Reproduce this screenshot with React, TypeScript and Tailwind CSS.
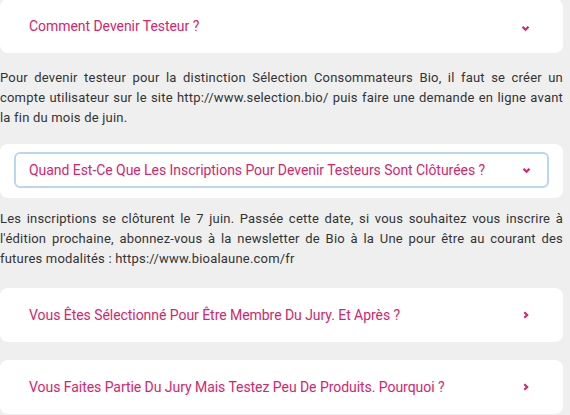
import React from 'react';

type Item = {
  question: string;
  answer?: string;
  open?: boolean;
  focused?: boolean;
};

const ChevronDown: React.FC = () => (
  <svg width="9" height="7" viewBox="0 0 9 7" className="shrink-0">
    <polyline points="1.5,1.8 4.5,4.8 7.5,1.8" fill="none" stroke="#d6246e" strokeWidth="2.2" />
  </svg>
);

const ChevronRight: React.FC = () => (
  <svg width="6" height="8" viewBox="0 0 6 8" className="shrink-0">
    <polyline points="1.3,1.2 4.2,4 1.3,6.8" fill="none" stroke="#d6246e" strokeWidth="2.1" />
  </svg>
);

const items: Item[] = [
  {
    question: 'Comment Devenir Testeur ?',
    answer:
      'Pour devenir testeur pour la distinction Sélection Consommateurs Bio, il faut se créer un compte utilisateur sur le site http://www.selection.bio/ puis faire une demande en ligne avant la fin du mois de juin.',
    open: true,
  },
  {
    question: 'Quand Est-Ce Que Les Inscriptions Pour Devenir Testeurs Sont Clôturées ?',
    answer:
      "Les inscriptions se clôturent le 7 juin. Passée cette date, si vous souhaitez vous inscrire à l'édition prochaine, abonnez-vous à la newsletter de Bio à la Une pour être au courant des futures modalités : https://www.bioalaune.com/fr",
    open: true,
    focused: true,
  },
  { question: 'Vous Êtes Sélectionné Pour Être Membre Du Jury. Et Après ?' },
  { question: 'Vous Faites Partie Du Jury Mais Testez Peu De Produits. Pourquoi ?' },
];

const FaqRow: React.FC<{ item: Item }> = ({ item }) => {
  const label = (
    <span className="flex-1 text-[14px] leading-5 text-[#d6246e] tracking-[-0.05px]">{item.question}</span>
  );
  if (item.focused) {
    return (
      <div className="bg-white rounded-lg px-[14px] pt-2 pb-[10px]">
        <div className="flex items-center h-[36px] pl-[13px] pr-[16px] border-2 border-[#bcd6f2] rounded-md">
          {label}
          <ChevronDown />
        </div>
      </div>
    );
  }
  return (
    <div className="bg-white rounded-lg h-[54px] flex items-center pl-[29px] pr-[33px]">
      {label}
      {item.open ? (
        <span className="pt-[5px]"><ChevronDown /></span>
      ) : (
        <span className="pr-[1px]"><ChevronRight /></span>
      )}
    </div>
  );
};

const App: React.FC = () => {
  return (
    <div className="w-[570px] h-[415px] overflow-hidden bg-[#efefef] font-['Roboto',sans-serif]">
      <div className="w-[563px] -mt-px">
        <FaqRow item={items[0]} />
        <p className="mt-[15px] text-[13px] leading-5 text-[#333] text-justify tracking-[0.2px]">
          {items[0].answer}
        </p>
        <div className="mt-[16px]">
          <FaqRow item={items[1]} />
        </div>
        <p className="mt-[11px] text-[13px] leading-5 text-[#333] text-justify tracking-[0.2px]">
          {items[1].answer}
        </p>
        <div className="mt-[19px] flex flex-col gap-[18px]">
          <FaqRow item={items[2]} />
          <FaqRow item={items[3]} />
        </div>
      </div>
    </div>
  );
};

export default App;
